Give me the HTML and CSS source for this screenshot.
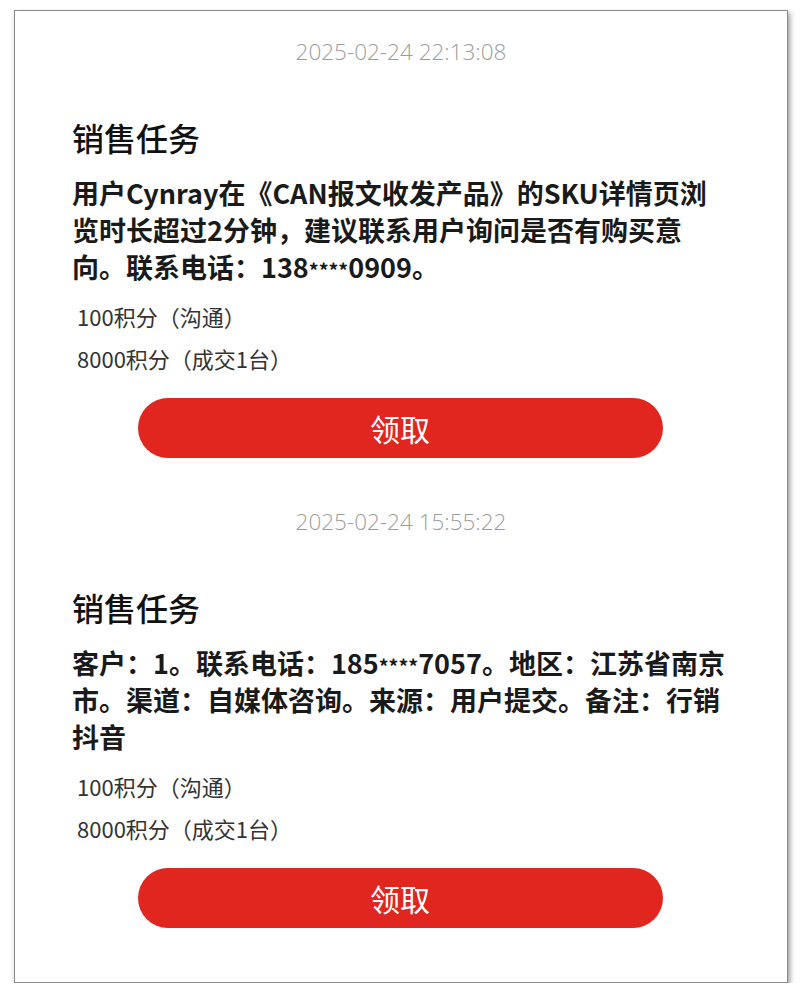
FILE: index.html
```html
<!DOCTYPE html>
<html lang="zh-CN">
<head>
<meta charset="utf-8">
<title>销售任务</title>
<link rel="stylesheet" href="styles.css">
</head>
<body>
<div class="frame">
  <section class="item">
    <div class="time">2025-02-24 22:13:08</div>
    <div class="card">
      <h2 class="title">销售任务</h2>
      <p class="desc">用户Cynray在《CAN报文收发产品》的SKU详情页浏览时长超过2分钟，建议联系用户询问是否有购买意向。联系电话：138<span class="mask">****</span>0909。</p>
      <div class="points">
        <div class="pt">100积分（沟通）</div>
        <div class="pt">8000积分（成交1台）</div>
      </div>
      <button class="btn">领取</button>
    </div>
  </section>
  <section class="item">
    <div class="time">2025-02-24 15:55:22</div>
    <div class="card">
      <h2 class="title">销售任务</h2>
      <p class="desc">客户：1。联系电话：185<span class="mask">****</span>7057。地区：江苏省南京市。渠道：自媒体咨询。来源：用户提交。备注：行销抖音</p>
      <div class="points">
        <div class="pt">100积分（沟通）</div>
        <div class="pt">8000积分（成交1台）</div>
      </div>
      <button class="btn">领取</button>
    </div>
  </section>
</div>
</body>
</html>
```

FILE: styles.css
```css
html, body {
  margin: 0;
  padding: 0;
  background: #ffffff;
}

body {
  font-family: "Noto Sans CJK SC", "Noto Sans", sans-serif;
  color: #222;
}

.frame {
  margin: 10px 0 0 14px;
  width: 772px;
  height: 971px;
  border: 1px solid #8a8a8a;
  box-shadow: 2px 3px 5px rgba(0, 0, 0, 0.4);
  background: #fff;
  box-sizing: content-box;
  overflow: hidden;
}

.item {
  padding: 0 57px;
}

.item + .item .time {
  margin-top: 49px;
}

.time {
  margin-top: 26px;
  height: 30px;
  line-height: 30px;
  text-align: center;
  font-family: "Open Sans", "Liberation Sans", sans-serif;
  font-size: 22.5px;
  font-weight: 300;
  color: #9c9c9c;
}

.card {
  display: flex;
  flex-direction: column;
}

.title {
  margin: 50px 0 0;
  font-size: 32px;
  line-height: 40px;
  font-weight: 500;
  color: #111;
}

.desc {
  margin: 17px 0 0;
  font-size: 27px;
  line-height: 37px;
  font-weight: 700;
  color: #1a1a1a;
}

.mask {
  font-size: 0.72em;
  line-height: 1;
}

.points {
  margin-top: 10px;
  padding-left: 5px;
}

.pt {
  font-size: 22px;
  line-height: 42px;
  color: #333;
}

.btn {
  align-self: center;
  margin-top: 19px;
  margin-right: 2px;
  width: 525px;
  height: 60px;
  border: none;
  border-radius: 30px;
  background: #e0261f;
  color: #fff;
  font-family: "Noto Sans CJK SC", sans-serif;
  font-size: 30px;
  line-height: 60px;
  padding: 0;
}
```
